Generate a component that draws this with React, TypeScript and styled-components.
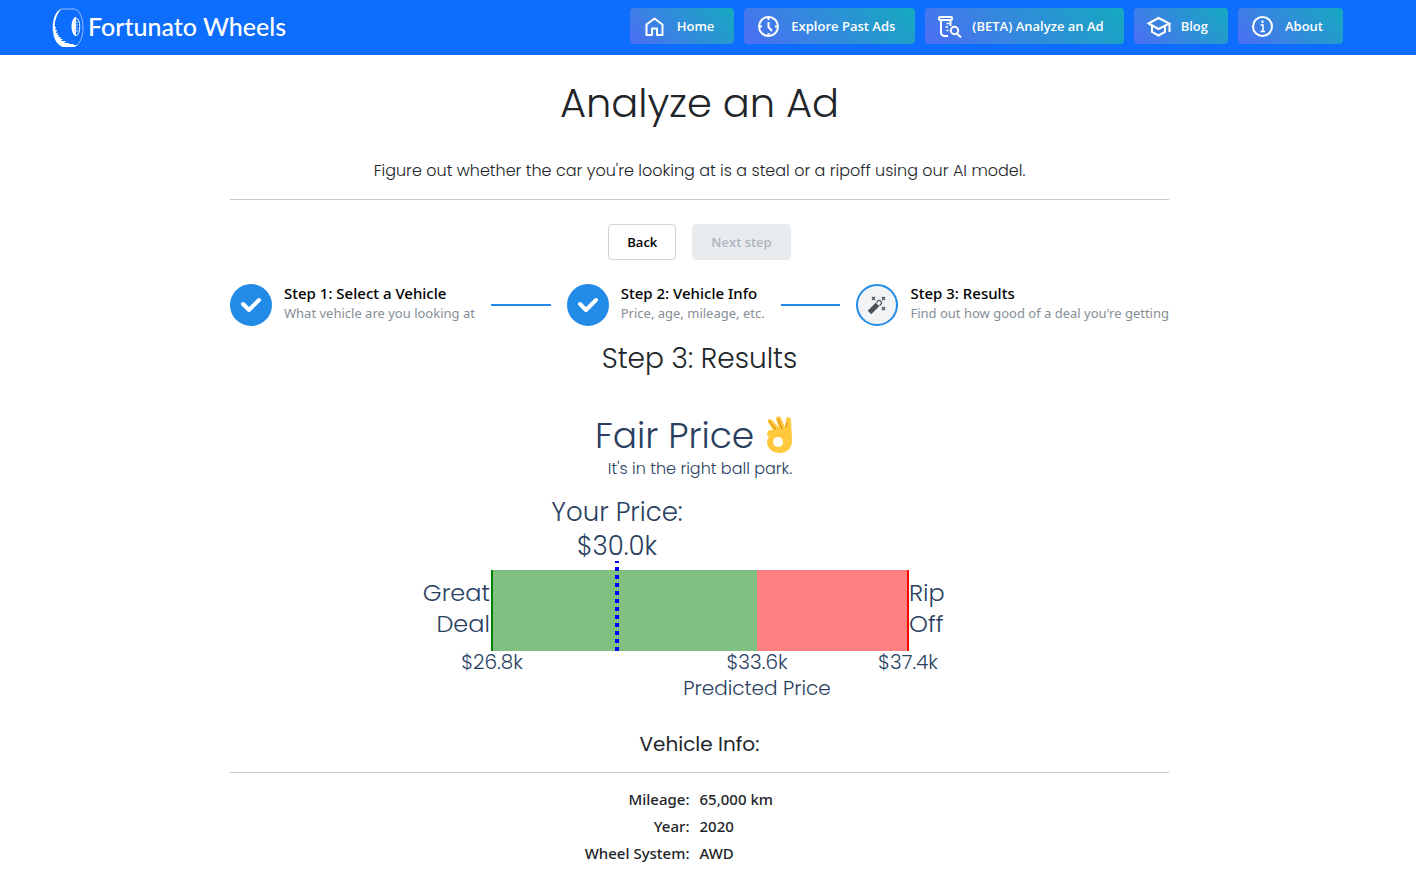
import React from "react";
import styled, { createGlobalStyle } from "styled-components";

const displayFont = `Poppins, Inter, "Liberation Sans", sans-serif`;
const uiFont = `"Segoe UI", "Open Sans", "Noto Sans", sans-serif`;
const bodyFont = `"Segoe UI", "Noto Sans", "Open Sans", sans-serif`;

const GlobalStyle = createGlobalStyle`
  *, *::before, *::after { box-sizing: border-box; }
  body {
    margin: 0;
    background: #fff;
    color: #212529;
    font: 300 16px/24px ${displayFont};
  }
`;

const Navbar = styled.header`
  display: flex;
  align-items: flex-start;
  justify-content: space-between;
  min-height: 55px;
  padding: 8px 73px 7px 52px;
  background: #0d6efd;
`;

const Brand = styled.a`
  display: flex;
  gap: 4px;
  color: #fff;
  font: 500 25px/36px Lato, sans-serif;
  text-decoration: none;
  white-space: nowrap;
`;

const NavLinks = styled.nav`
  display: flex;
  gap: 10px;
`;

const NavLink = styled.a`
  display: flex;
  align-items: center;
  gap: 10px;
  height: 36px;
  padding: 0 20px 0 12px;
  border-radius: 4px;
  background: linear-gradient(45deg, #4c6ef5 0%, #15aabf 100%);
  color: #fff;
  font: 600 13px/20px ${uiFont};
  text-decoration: none;
  white-space: nowrap;
`;

const NavIcon = styled.svg`
  width: 25px;
  height: 25px;
  fill: none;
  stroke: currentColor;
  stroke-width: 2;
`;

const Page = styled.div`
  padding-right: 17px;
`;

const Main = styled.main`
  display: flex;
  flex-direction: column;
  align-items: center;
  max-width: 939px;
  margin: 0 auto;
  padding: 24px 0 8px;
`;

const Title = styled.h1`
  margin: 0;
  font-size: 40px;
  line-height: 48px;
  font-weight: 300;
`;

const Lead = styled.p`
  margin: 32px 0 16px;
  text-align: center;
`;

const Rule = styled.hr`
  width: 100%;
  margin: 0;
  border: 0;
  border-top: 1px solid #c8c9ca;
`;

const Actions = styled.div`
  display: flex;
  gap: 16px;
  margin: 24px 0;
`;

const Button = styled.button`
  height: 36px;
  padding: 0 18px;
  border: 1px solid #ced4da;
  border-radius: 4px;
  background: #fff;
  color: #000;
  font: 600 13px/20px ${uiFont};

  &:disabled {
    border-color: #e9ecef;
    background: #e9ecef;
    color: #adb5bd;
  }
`;

const Stepper = styled.ol`
  display: flex;
  align-items: center;
  align-self: stretch;
  margin: 0;
  padding: 0;
  list-style: none;
`;

const Step = styled.li<{ $last?: boolean }>`
  display: flex;
  align-items: center;
  flex: ${(p) => (p.$last ? "0 0 auto" : "1 0 auto")};

  &:not(:last-child)::after {
    content: "";
    flex: 1;
    min-width: 24px;
    height: 2px;
    margin: 0 16px;
    background: #228be6;
  }
`;

const StepBadge = styled.span<{ $done: boolean }>`
  display: grid;
  place-items: center;
  width: 42px;
  height: 42px;
  margin-right: 12px;
  border: 2px solid #228be6;
  border-radius: 50%;
  background: ${(p) => (p.$done ? "#228be6" : "#f1f3f5")};
`;

const StepText = styled.span`
  display: flex;
  flex-direction: column;
  padding-bottom: 2px;
  font-family: ${bodyFont};
  white-space: nowrap;
`;

const StepLabel = styled.span`
  color: #000;
  font-size: 15px;
  line-height: 18px;
  font-weight: 500;
`;

const StepDescription = styled.span`
  color: #868e96;
  font-size: 13px;
  line-height: 22px;
  font-weight: 400;
`;

const SectionTitle = styled.h2`
  margin: 16px 0 0;
  font-size: 28px;
  line-height: 34px;
  font-weight: 300;
`;

const Chart = styled.svg`
  width: 100%;
  max-width: 599px;
  margin-top: 19px;
  fill: #2a3f5f;
`;

const ChartText = styled.text<{ $size: number }>`
  font-family: ${displayFont};
  font-size: ${(p) => p.$size}px;
  font-weight: 300;
`;

const InfoTitle = styled.h3`
  margin: 27px 0 16px;
  font-size: 20px;
  line-height: 24px;
  font-weight: 400;
`;

const InfoTable = styled.table`
  width: 100%;
  margin-top: 13px;
  border-collapse: collapse;
  font: 500 15px/27px ${bodyFont};

  th, td {
    width: 50%;
    padding: 0;
    font-weight: 500;
    text-align: left;
  }

  th {
    padding-right: 10px;
    text-align: right;
  }
`;

const TireLogo = () => (
  <svg width="32" height="40" viewBox="0 0 32 40" fill="none" aria-hidden="true">
    <path d="M10 1h12c6 1 9 9 9 19s-4 18-9 18H11C5 37 1 30 1 20S5 2 10 1z" stroke="#8fbbfe" />
    <path d="M9 1C4 3 1 10 1 19c0 11 4 18 10 20h11l4-2h-5l1-1h-6l2-1h-6l2-2h-5l2-2H8l1-2H6l1-2H5l1-2H4l1-3H3l1-3H3C2 14 5 6 9 1z" fill="#fff" />
    <path d="M24 9c-6 1-6 18 0 19z" fill="#fff" />
    <path d="M24 10c5 1 5 16 0 18" stroke="#fff" />
    <path d="M22 14h4M23 17h3M23 20h3M22 23h4" stroke="#b5d2ff" />
  </svg>
);

const HomeIcon = () => (
  <NavIcon viewBox="0 0 25 25" aria-hidden="true">
    <path d="M4.500 21V10.500l8-6 8 6V21H15v-6.500h-5V21z" strokeLinejoin="round" />
  </NavIcon>
);

const ClockIcon = () => (
  <NavIcon viewBox="0 0 25 25" aria-hidden="true">
    <circle cx="12.500" cy="12.500" r="9.500" />
    <path d="M12.500 3v3M12.500 19v3M3 12.500h3M19 12.500h3" />
    <path d="M12.500 8v5l3.500 4" />
  </NavIcon>
);

const AnalyzeIcon = () => (
  <NavIcon viewBox="0 0 25 25" aria-hidden="true">
    <rect x="2" y="3" width="13" height="3" rx="1" />
    <path d="M4 6v12.500A3.500 3.500 0 0 0 7.500 22H11M13.500 6v6" />
    <path d="M9.500 9.500h3M8.500 13h2.500M9.500 16.500h2" strokeWidth="1.500" />
    <circle cx="17.500" cy="16.500" r="3.700" />
    <path d="M20 19.500l4 4" />
  </NavIcon>
);

const BlogIcon = () => (
  <NavIcon viewBox="0 0 25 25" aria-hidden="true">
    <path d="M2.500 9.500l10-5.500 11 5.500-11 5.500z" />
    <path d="M6 12v6l6.500 3.500L19 18v-6M23.500 9v9" />
  </NavIcon>
);

const AboutIcon = () => (
  <NavIcon viewBox="0 0 25 25" aria-hidden="true">
    <circle cx="12.500" cy="12.500" r="9.500" />
    <path d="M10.500 11h2.500v6.500M10.500 17.500h4.500" strokeWidth="1.500" />
    <circle cx="12.500" cy="7.800" r="1.200" fill="currentColor" stroke="none" />
  </NavIcon>
);

const CheckIcon = () => (
  <svg width="22" height="18" viewBox="0 0 22 18" fill="none" aria-hidden="true">
    <path d="M3 8l6 6L19 4" stroke="#fff" strokeWidth="4" strokeLinecap="round" strokeLinejoin="round" />
  </svg>
);

const WandIcon = () => (
  <svg width="20" height="20" viewBox="0 0 20 20" fill="none" stroke="#495057" aria-hidden="true">
    <path d="M2.500 17.500L10.500 9.500" strokeWidth="5" />
    <path d="M9.500 7.500l2-2c1-1 4 2 3 3l-2 2" strokeWidth="1.200" strokeLinejoin="round" />
    <path d="M5 2l3 3M8 2L5 5M15 2l3 3M18 2l-3 3M15 12l3 3M18 12l-3 3" strokeWidth="1.200" />
  </svg>
);

const navItems = [
  { label: "Home", Icon: HomeIcon },
  { label: "Explore Past Ads", Icon: ClockIcon },
  { label: "(BETA) Analyze an Ad", Icon: AnalyzeIcon },
  { label: "Blog", Icon: BlogIcon },
  { label: "About", Icon: AboutIcon },
];

const steps = [
  { label: "Step 1: Select a Vehicle", description: "What vehicle are you looking at", done: true },
  { label: "Step 2: Vehicle Info", description: "Price, age, mileage, etc.", done: true },
  { label: "Step 3: Results", description: "Find out how good of a deal you're getting", done: false },
];

const vehicle = [
  ["Mileage:", "65,000 km"],
  ["Year:", "2020"],
  ["Wheel System:", "AWD"],
];

const PriceChart = () => (
  <Chart viewBox="0 0 599 310" role="img" aria-label="Fair price: $30.0k">
    <ChartText $size={36} x="195" y="53">Fair Price</ChartText>
    <g>
      <path d="M373 35l-5-8c-1-3 2-4 4-2l7 8-3-9c0-3 4-3 5-1l4 9 1-8c1-3 5-2 5 1l1 21c0 7-5 12-12 12-8 0-13-5-13-11 0-2 1-4 2-5-3-2-2-6 1-7z" fill="#ffc83d" />
      <path d="M369 26l7 9M378 24l4 10M386 32l1-4" stroke="#d67d00" strokeWidth="1" fill="none" />
      <circle cx="378" cy="47" r="5" fill="#fff" />
    </g>
    <ChartText $size={16} x="300" y="79" textAnchor="middle">It's in the right ball park.</ChartText>
    <ChartText $size={26} x="217" y="126" textAnchor="middle">Your Price:</ChartText>
    <ChartText $size={26} x="217" y="160" textAnchor="middle">$30.0k</ChartText>
    <rect x="92" y="175" width="265" height="81" fill="#80c080" />
    <rect x="357" y="175" width="151" height="81" fill="#ff8080" />
    <path d="M92 175v81" stroke="green" strokeWidth="2" />
    <path d="M508 175v81" stroke="red" strokeWidth="2" />
    <path d="M217 256v-90" stroke="blue" strokeWidth="4" strokeDasharray="4" />
    <ChartText $size={24} x="90" y="206" textAnchor="end">Great</ChartText>
    <ChartText $size={24} x="90" y="237" textAnchor="end">Deal</ChartText>
    <ChartText $size={24} x="509" y="206">Rip</ChartText>
    <ChartText $size={24} x="509" y="237">Off</ChartText>
    <ChartText $size={20} x="92" y="274" textAnchor="middle">$26.8k</ChartText>
    <ChartText $size={20} x="357" y="274" textAnchor="middle">$33.6k</ChartText>
    <ChartText $size={20} x="508" y="274" textAnchor="middle">$37.4k</ChartText>
    <ChartText $size={20} x="357" y="300" textAnchor="middle">Predicted Price</ChartText>
  </Chart>
);

export default function App() {
  return (
    <>
      <GlobalStyle />
      <Navbar>
        <Brand href="#">
          <TireLogo />
          Fortunato Wheels
        </Brand>
        <NavLinks>
          {navItems.map(({ label, Icon }) => (
            <NavLink href="#" key={label}>
              <Icon />
              {label}
            </NavLink>
          ))}
        </NavLinks>
      </Navbar>
      <Page>
        <Main>
          <Title>Analyze an Ad</Title>
          <Lead>Figure out whether the car you're looking at is a steal or a ripoff using our AI model.</Lead>
          <Rule />
          <Actions>
            <Button type="button">Back</Button>
            <Button type="button" disabled>Next step</Button>
          </Actions>
          <Stepper>
            {steps.map((step, i) => (
              <Step key={step.label} $last={i === steps.length - 1}>
                <StepBadge $done={step.done}>{step.done ? <CheckIcon /> : <WandIcon />}</StepBadge>
                <StepText>
                  <StepLabel>{step.label}</StepLabel>
                  <StepDescription>{step.description}</StepDescription>
                </StepText>
              </Step>
            ))}
          </Stepper>
          <SectionTitle>Step 3: Results</SectionTitle>
          <PriceChart />
          <InfoTitle>Vehicle Info:</InfoTitle>
          <Rule />
          <InfoTable>
            <tbody>
              {vehicle.map(([name, value]) => (
                <tr key={name}>
                  <th scope="row">{name}</th>
                  <td>{value}</td>
                </tr>
              ))}
            </tbody>
          </InfoTable>
        </Main>
      </Page>
    </>
  );
}
